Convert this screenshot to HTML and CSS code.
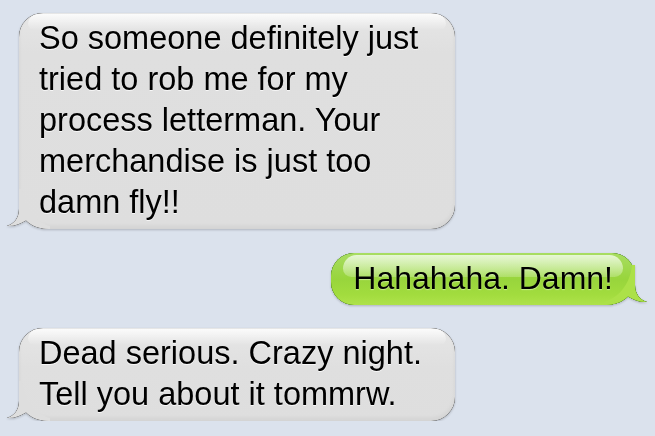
FILE: index.html
```html
<!DOCTYPE html>
<html>
<head>
    <title>Messages</title>
    <link rel="stylesheet" href="styles.css">
</head>
<body>
    <div class="thread">
        <div class="bubble bubble-in first">
            <svg class="tail" viewBox="0 0 44 40" width="44" height="40"><path d="M13 0 L13 20 C13 29 8 35 1 37 C8 37.5 14 35 20 31.5 C25 36 31 40 44 40 L44 37 C30 33 18 20 16 0 Z"/></svg>
            <span class="text">So someone definitely just<br>tried to rob me for my<br>process letterman. Your<br>merchandise is just too<br>damn fly!!</span>
        </div>
        <div class="bubble bubble-out">
            <svg class="tail" viewBox="0 0 44 40" width="44" height="40"><path d="M13 0 L13 20 C13 29 8 35 1 37 C8 37.5 14 35 20 31.5 C25 36 31 40 44 40 L44 37 C30 33 18 20 16 0 Z"/></svg>
            <span class="text">Hahahaha. Damn!</span>
        </div>
        <div class="bubble bubble-in">
            <svg class="tail" viewBox="0 0 44 40" width="44" height="40"><path d="M13 0 L13 20 C13 29 8 35 1 37 C8 37.5 14 35 20 31.5 C25 36 31 40 44 40 L44 37 C30 33 18 20 16 0 Z"/></svg>
            <span class="text">Dead serious. Crazy night.<br>Tell you about it tommrw.</span>
        </div>
    </div>
</body>
</html>
```

FILE: styles.css
```css
body {
    margin: 0;
    background-color: #dbe2ed;
    font-family: 'Liberation Sans', Arial, sans-serif;
    color: #000;
}
.thread {
    display: flex;
    flex-direction: column;
    align-items: flex-start;
    gap: 23px;
    padding: 13px 20px 0 19px;
}
.bubble {
    position: relative;
    font-size: 32.5px;
    line-height: 41px;
    white-space: nowrap;
    border-radius: 24px;
}
.bubble::before {
    content: "";
    position: absolute;
    top: 1px;
    left: 9px;
    right: 9px;
    border-radius: 16px 16px 10px 10px;
}
.text {
    position: relative;
}
.tail {
    position: absolute;
    bottom: 0;
    left: -13px;
}
.first {
    margin-bottom: 1px;
}

/* incoming: gray */
.bubble-in {
    width: 436px;
    box-sizing: border-box;
    padding: 5px 0 6px 20px;
    background: linear-gradient(#e6e6e6, #dfdfdf 40px, #dedede);
    border-bottom-left-radius: 30px;
    box-shadow: inset 0 -3px 4px rgba(0, 0, 0, 0.05);
    filter: drop-shadow(0 0 0.6px rgba(40, 40, 40, 0.9)) drop-shadow(0 0 0.4px rgba(40, 40, 40, 0.7)) drop-shadow(0 1px 1px rgba(0, 0, 0, 0.2));
}
.bubble-in::before {
    height: 16px;
    background: linear-gradient(rgba(255, 255, 255, 0.85), rgba(255, 255, 255, 0));
}
.bubble-in .tail path {
    fill: #dedede;
}
.bubble-in .text {
    text-shadow: 0 1px 0 rgba(255, 255, 255, 0.75);
}

/* outgoing: green */
.bubble-out {
    align-self: flex-end;
    font-size: 32px;
    padding: 5px 22px 6px 22px;
    background: linear-gradient(#a8dd62, #98d53c 50%, #a2dc3e 80%, #aee24a);
    border-bottom-right-radius: 30px;
    filter: drop-shadow(0 0 0.6px rgba(40, 100, 10, 0.95)) drop-shadow(0 0 0.4px rgba(40, 100, 10, 0.8)) drop-shadow(0 1px 1px rgba(0, 0, 0, 0.2));
}
.bubble-out::before {
    top: 2px;
    left: 12px;
    right: 12px;
    height: 22px;
    background: linear-gradient(rgba(238, 250, 225, 0.9), rgba(215, 242, 180, 0.35));
}
.bubble-out .tail {
    left: auto;
    right: -13px;
    transform: scaleX(-1);
}
.bubble-out .tail path {
    fill: #acE148;
}
.bubble-out .text {
    text-shadow: 0 1px 1px rgba(230, 250, 200, 0.6);
}
```
